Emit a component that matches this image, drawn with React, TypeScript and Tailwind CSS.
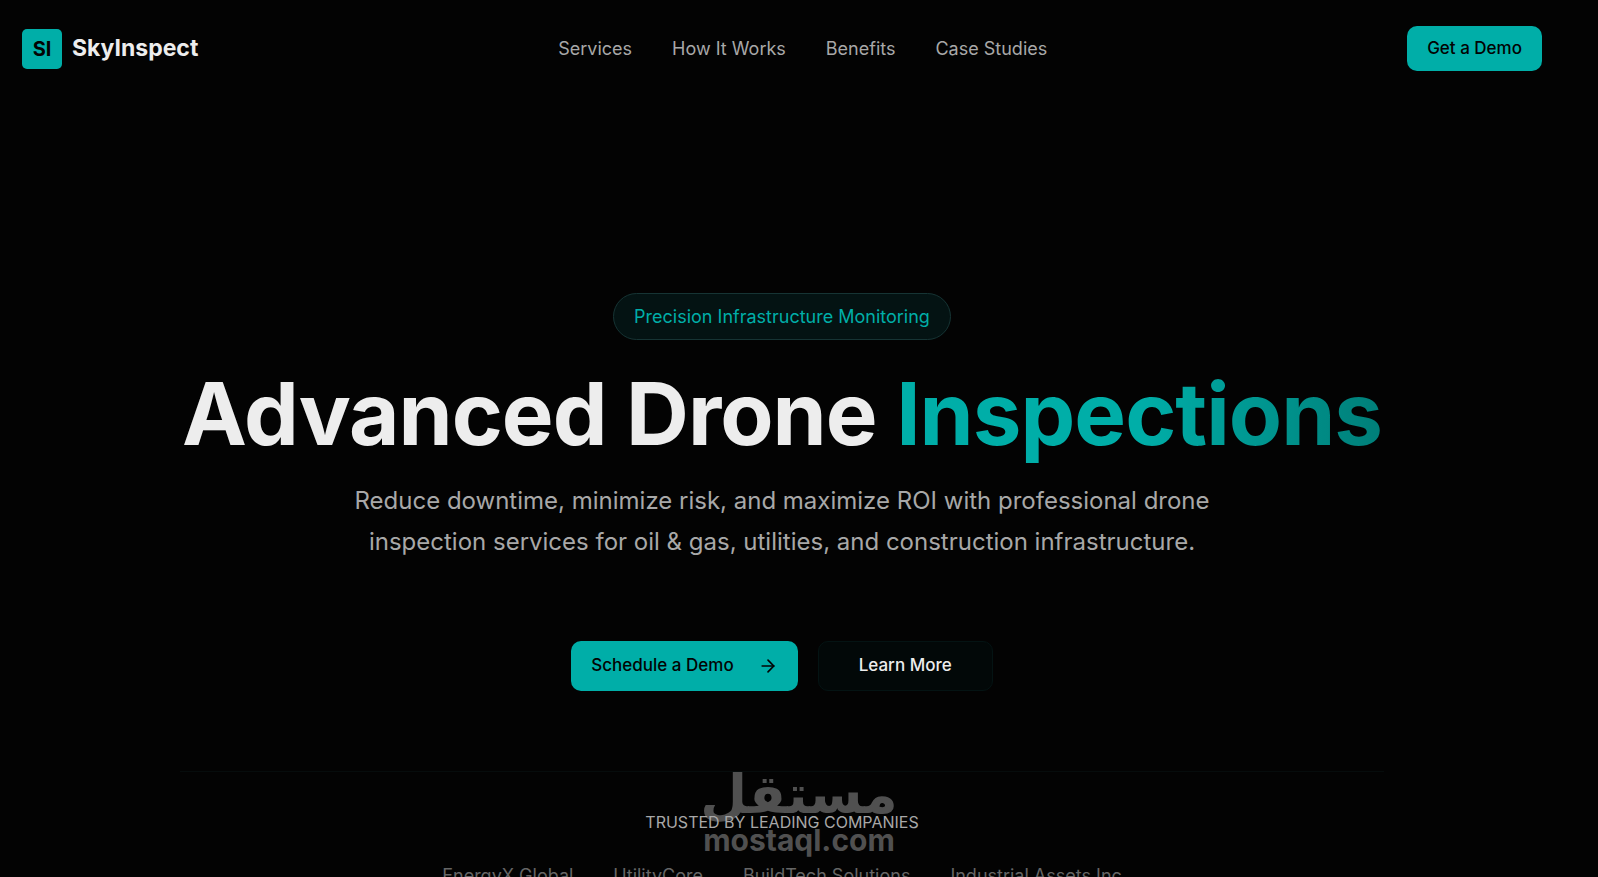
import { ArrowRight } from 'lucide-react'

const NAV_LINKS = [
  { label: 'Services', href: '#services' },
  { label: 'How It Works', href: '#how-it-works' },
  { label: 'Benefits', href: '#benefits' },
  { label: 'Case Studies', href: '#case-studies' },
]

const COMPANIES = ['EnergyX Global', 'UtilityCore', 'BuildTech Solutions', 'Industrial Assets Inc']

function Header() {
  return (
    <header className="flex items-center justify-between px-[22px] pt-[26px] pb-[26px]">
      <a href="#" className="flex items-center gap-[10px]">
        <span className="flex size-10 items-center justify-center rounded-[5px] bg-[#00aea8] text-[20px] font-bold text-[#030303]">
          SI
        </span>
        <span className="text-[23px] font-bold">SkyInspect</span>
      </a>

      <nav className="flex items-center gap-10">
        {NAV_LINKS.map((link) => (
          <a key={link.href} href={link.href} className="text-[18px] text-[#a8a8a8]">
            {link.label}
          </a>
        ))}
      </nav>

      <button className="h-[45px] rounded-[10px] bg-[#00aea8] px-5 text-[17px] font-medium text-[#030303]">
        Get a Demo
      </button>
    </header>
  )
}

// Sits behind the page content, pinned to the bottom centre of the window
function Watermark() {
  return (
    <div className="pointer-events-none absolute bottom-[22px] left-1/2 flex -translate-x-1/2 flex-col items-center text-[#505050]">
      <span
        dir="rtl"
        lang="ar"
        className="font-['DejaVu_Sans',sans-serif] text-[54px] leading-[60px] font-bold"
      >
        مستقل
      </span>
      <span className="text-[30px] leading-[30px] font-bold">mostaql.com</span>
    </div>
  )
}

function Hero() {
  return (
    <main className="relative flex flex-col items-center px-[22px] pt-[196px] text-center">
      <div className="flex h-[47px] items-center rounded-full border border-[#163434] bg-[#041313] px-5 text-[18px] text-[#00aea8]">
        Precision Infrastructure Monitoring
      </div>

      <h1 className="mt-[29px] text-[87px] leading-[90px] font-bold tracking-[-1px] whitespace-nowrap">
        Advanced Drone{' '}
        <span className="bg-linear-to-r from-[#00aea8] from-50% to-[#007f79] bg-clip-text text-transparent">
          Inspections
        </span>
      </h1>

      <p className="mt-[21px] max-w-[880px] text-[24px] leading-[41px] text-[#a8a8a8]">
        Reduce downtime, minimize risk, and maximize ROI with professional drone inspection services
        for oil &amp; gas, utilities, and construction infrastructure.
      </p>

      <div className="mt-[79px] flex gap-5">
        <button className="flex h-[50px] items-center gap-6 rounded-[10px] bg-[#00aea8] px-5 text-[17px] font-medium text-[#030303]">
          Schedule a Demo
          <ArrowRight className="size-5" />
        </button>
        <button className="h-[50px] rounded-[10px] border border-[#041313] bg-[#020808] px-10 text-[17px] font-medium">
          Learn More
        </button>
      </div>

      {/* Social proof */}
      <section className="mt-20 w-full max-w-[1204px] border-t border-[#060c0c] pt-10">
        <p className="text-[16px] leading-5 text-[#a8a8a8]">TRUSTED BY LEADING COMPANIES</p>
        <ul className="mt-8 flex justify-center gap-10 text-[18px] leading-6 text-[#666666]">
          {COMPANIES.map((name) => (
            <li key={name}>{name}</li>
          ))}
        </ul>
      </section>
    </main>
  )
}

export default function App() {
  return (
    <div className="relative h-screen overflow-hidden bg-[#030303] pr-[34px] font-[Inter,sans-serif] text-[#ededed]">
      <Watermark />
      <Header />
      <Hero />
    </div>
  )
}
